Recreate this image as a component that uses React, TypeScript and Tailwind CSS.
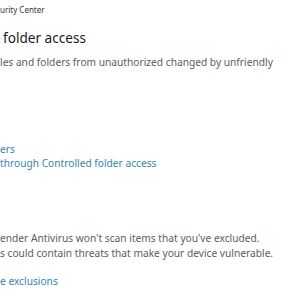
import React from "react";

const linkCls = "text-[10.2px] leading-[14px] text-[#3585ad]";
const bodyCls = "text-[10.2px] leading-[15px] text-[#5c5c5c]";

export default function App() {
  return (
    <div className="w-[300px] h-[300px] overflow-hidden bg-white font-['Noto_Sans',sans-serif]">
      <div className="flex flex-col pt-[3px] whitespace-nowrap">
        {/* window title, cut off on the left */}
        <p className="text-[8px] leading-[14px] text-[#333333]">urity Center</p>

        <h1 className="mt-[10px] pl-[3px] text-[13.6px] leading-[22px] font-normal text-[#1a1a1a]">
          folder access
        </h1>
        <p className={`mt-[6px] ${bodyCls}`}>
          les and folders from unauthorized changed by unfriendly
        </p>

        <a className={`mt-[72px] ${linkCls}`}>ers</a>
        <a className={linkCls}>through Controlled folder access</a>

        <p className={`mt-[61px] ${bodyCls}`}>
          ender Antivirus won't scan items that you've excluded.
        </p>
        <p className={bodyCls}>
          s could contain threats that make your device vulnerable.
        </p>

        <a className={`mt-[13px] ${linkCls}`}>e exclusions</a>
      </div>
    </div>
  );
}
